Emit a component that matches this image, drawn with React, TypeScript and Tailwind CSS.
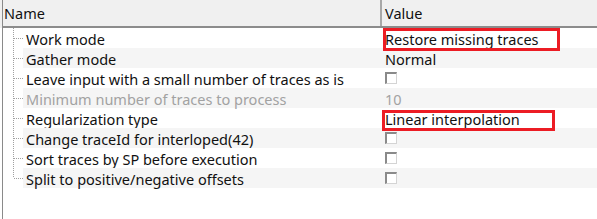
import React from "react";

type Row = {
  name: string;
  value?: string;
  checkbox?: boolean;
  disabled?: boolean;
  box?: "a" | "b";
};

const rows: Row[] = [
  { name: "Work mode", value: "Restore missing traces", box: "a" },
  { name: "Gather mode", value: "Normal" },
  { name: "Leave input with a small number of traces as is", checkbox: true },
  { name: "Minimum number of traces to process", value: "10", disabled: true },
  { name: "Regularization type", value: "Linear interpolation", box: "b" },
  { name: "Change traceId for interloped(42)", checkbox: true },
  { name: "Sort traces by SP before execution", checkbox: true },
  { name: "Split to positive/negative offsets", checkbox: true },
];

function Tree({ last }: { last: boolean }) {
  return (
    <svg width="20" height="20" className="shrink-0 block">
      <line
        x1="10.5"
        y1="0"
        x2="10.5"
        y2={last ? 10 : 20}
        stroke="#a0a0a0"
        strokeWidth="1"
        strokeDasharray="1 1"
      />
      <line x1="11" y1="10.5" x2="20" y2="10.5" stroke="#a0a0a0" strokeWidth="1" strokeDasharray="1 1" />
    </svg>
  );
}

function Check() {
  return (
    <div className="w-[12px] h-[12px] bg-white border-t-2 border-l-2 border-t-[#8a8a8a] border-l-[#8a8a8a] border-b border-r border-b-[#d4d4d4] border-r-[#d4d4d4]" />
  );
}

export default function App() {
  return (
    <div
      className="w-[597px] h-[219px] bg-white overflow-hidden flex text-[14.5px] text-[#111]"
      style={{ fontFamily: '"Noto Sans", "Open Sans", sans-serif' }}
    >
      <div className="w-[2px] shrink-0 flex flex-col">
        <div className="h-[28px] bg-[#f0f0f0]" />
        <div className="flex-1 bg-white" />
      </div>
      <div className="flex-1 flex flex-col border-l border-[#8a8a8a]">
        <div className="h-[28px] shrink-0 flex bg-[#f0f0f0] border-b-2 border-b-[#8c8c8c] leading-none">
          <div className="w-[377px] shrink-0 flex items-center pl-[1px]">Name</div>
          <div className="w-[2px] shrink-0 bg-[#a8a8a8]" />
          <div className="flex-1 flex items-center pl-[3px]">Value</div>
        </div>
        {rows.map((r, i) => {
          const alt = i % 2 === 1;
          return (
            <div key={i} className="h-[20px] shrink-0 flex leading-none">
              <Tree last={i === rows.length - 1} />
              <div
                className={`w-[358px] shrink-0 flex items-center pl-[3px] pt-[3px] whitespace-nowrap ${alt ? "bg-[#f5f5f5]" : ""} ${r.disabled ? "text-[#a2a2a2]" : ""}`}
              >
                {r.name}
              </div>
              <div
                className={`relative flex-1 flex items-center pl-[4px] whitespace-nowrap ${alt ? "bg-[#f5f5f5]" : ""} ${r.disabled ? "text-[#a2a2a2]" : ""}`}
              >
                {r.checkbox ? <Check /> : <span className="pt-[3px]">{r.value}</span>}
                {r.box === "a" && (
                  <div className="absolute z-10 left-[2px] top-0 w-[177px] h-[23px] border-[3px] border-[#ec1c24]" />
                )}
                {r.box === "b" && (
                  <div className="absolute z-10 left-[1px] top-[2px] w-[173px] h-[21px] border-[3px] border-[#ec1c24]" />
                )}
              </div>
            </div>
          );
        })}
      </div>
    </div>
  );
}
